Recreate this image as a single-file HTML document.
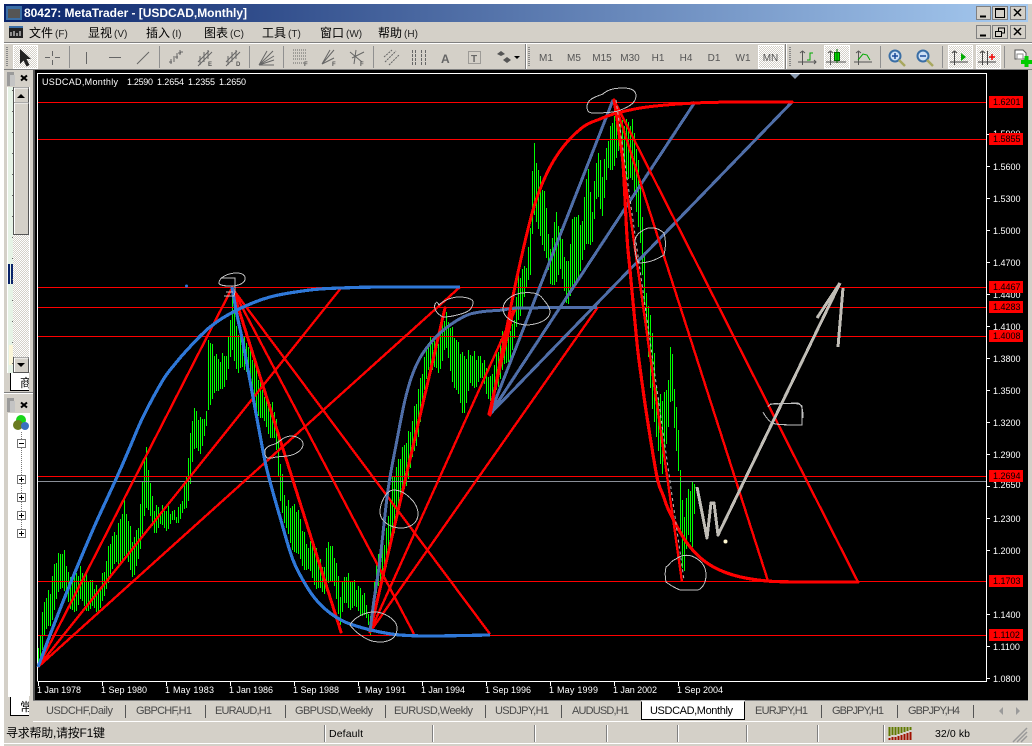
<!DOCTYPE html>
<html><head><meta charset="utf-8"><title>MetaTrader</title>
<style>
html,body{margin:0;padding:0;background:#fff;width:1032px;height:746px;overflow:hidden}
svg{display:block}
text{font-family:"Liberation Sans","WenQuanYi Zen Hei","Noto Sans CJK SC",sans-serif}
.ax{font-size:9px;fill:#fff}
.pl{font-size:9px;fill:#000}
.tb{font-size:11px;fill:#4a4a4a}
.m{font-size:12px;fill:#000}
.ms{font-size:10px;fill:#222}
.tf{font-size:10px;fill:#555}
.sm{font-size:6px;fill:#555;font-weight:bold}
.ic{fill:none;stroke:#666;stroke-width:1}
.r2{fill:none;stroke:#f00;stroke-width:2.4;shape-rendering:crispEdges}
.r3{fill:none;stroke:#f00;stroke-width:3;stroke-linejoin:round;stroke-linecap:round;shape-rendering:crispEdges}
.b1{fill:none;stroke:#2f78d8;stroke-width:3.2;stroke-linejoin:round;shape-rendering:crispEdges}
.b2{fill:none;stroke:#4f6ea8;stroke-width:3;stroke-linejoin:round;shape-rendering:crispEdges}
.w{fill:none;stroke:#c0c0c0;stroke-width:1;shape-rendering:crispEdges}
.g{fill:none;stroke:#c0bdb6;stroke-width:3;stroke-linejoin:round;shape-rendering:crispEdges}
</style></head><body>
<svg width="1032" height="746" viewBox="0 0 1032 746" xmlns="http://www.w3.org/2000/svg">
<defs>
<linearGradient id="tg" x1="0" x2="1" y1="0" y2="0"><stop offset="0" stop-color="#0a246a"/><stop offset="1" stop-color="#a6caf0"/></linearGradient>
<pattern id="dz" width="2" height="2" patternUnits="userSpaceOnUse"><rect width="2" height="2" fill="#d4d0c8"/><rect width="1" height="1" fill="#fff"/><rect x="1" y="1" width="1" height="1" fill="#fff"/></pattern>
</defs>
<rect width="1032" height="746" fill="#d4d0c8"/>
<rect width="1032" height="4" fill="#fff"/><rect width="4" height="746" fill="#fff"/>
<rect x="4" y="4" width="1024" height="18" fill="url(#tg)"/>
<rect x="6" y="6" width="16" height="14" fill="#3a6ea5"/><rect x="8" y="9" width="12" height="9" fill="#555"/>
<text x="24" y="17" font-size="12" font-weight="bold" fill="#fff" textLength="223">80427: MetaTrader - [USDCAD,Monthly]</text>

<!-- window buttons -->
<g fill="#d4d0c8" stroke="#808080">
<rect x="976.500" y="6.500" width="14" height="13"/><rect x="992.500" y="6.500" width="15" height="13"/><rect x="1010.500" y="6.500" width="15" height="13"/>
<rect x="976.500" y="25.500" width="14" height="13"/><rect x="992.500" y="25.500" width="15" height="13"/><rect x="1010.500" y="25.500" width="15" height="13"/>
</g>
<g fill="none" stroke="#000">
<path d="M980 16.500h6M980 35.500h6" stroke-width="2"/>
<rect x="995.500" y="8.500" width="9" height="9"/><path d="M995 9.500h10"/>
<path d="M1014 9l7 7M1021 9l-7 7M1014 28l7 7M1021 28l-7 7" stroke-width="1.500"/>
<rect x="995.500" y="31.500" width="6" height="5"/><path d="M998.500 31v-3h6v5h-3"/>
</g>

<!-- menu -->
<rect x="9" y="26" width="14" height="12" fill="#222"/><rect x="9" y="26" width="14" height="2" fill="#3a6ea5"/><path d="M11 36v-4M14 36v-5M17 36v-3M20 36v-5" stroke="#fff"/>
<text class="m" x="29" y="37">文件<tspan class="ms" dx="2">(F)</tspan></text>
<text class="m" x="88" y="37">显视<tspan class="ms" dx="2">(V)</tspan></text>
<text class="m" x="146" y="37">插入<tspan class="ms" dx="2">(I)</tspan></text>
<text class="m" x="204" y="37">图表<tspan class="ms" dx="2">(C)</tspan></text>
<text class="m" x="262" y="37">工具<tspan class="ms" dx="2">(T)</tspan></text>
<text class="m" x="320" y="37">窗口<tspan class="ms" dx="2">(W)</tspan></text>
<text class="m" x="378" y="37">帮助<tspan class="ms" dx="2">(H)</tspan></text>

<!-- toolbar -->
<rect x="4" y="42" width="1028" height="1" fill="#808080"/><rect x="4" y="43" width="1028" height="1" fill="#fff"/>
<rect x="4" y="69" width="1028" height="1" fill="#808080"/>
<path d="M525.500 44v25M785.500 44v25" stroke="#808080"/><path d="M526.500 44v25M786.500 44v25" stroke="#fff"/>
<path d="M7 47v20M529 47v20M790 47v20" stroke="#888" stroke-width="2" stroke-dasharray="1 1" fill="none"/>
<g fill="url(#dz)" stroke="#fff">
<rect x="13.500" y="45.500" width="24" height="23"/><rect x="758.500" y="45.500" width="25" height="23"/>
<rect x="824.500" y="45.500" width="25" height="23"/><rect x="948.500" y="45.500" width="24" height="23"/><rect x="976.500" y="45.500" width="24" height="23"/>
</g>
<path d="M69.500 46v22M159.500 46v22M249.500 46v22M283.500 46v22M373.500 46v22M880.500 46v22M942.500 46v22M1004.500 46v22" stroke="#909090"/>
<!-- icons -->
<path d="M20 49l0 15 3.500-3.500 3 6 3-1.500-3-6 4.500 0z" fill="#222"/>
<path class="ic" d="M52.500 51v5M52.500 60v5M45 57.500h5M55 57.500h5M86.500 52v12M109 57.500h12M137 64l12-12"/>
<path class="ic" d="M171 64v-5M169 62h3M174 62v-6M177 59v-6M175 57h3M180 55v-5M178 53h3M183 52h-3"/>
<path class="ic" d="M198 62l11-11M198 66l14-14M200 56v9M204 52v10M208 50v9"/><text class="sm" x="208" y="66">E</text>
<path class="ic" d="M226 62l11-11M226 66l14-14M228 56v9M232 52v10M236 50v9"/><text class="sm" x="236" y="66">D</text>
<path class="ic" d="M259 65l14-14M259 65l15-9M259 65l15-5M259 65l15 0M259 65l8-14"/>
<path class="ic" stroke-dasharray="1 1" d="M293 50h14M293 53h14M293 56h14M293 59h14M293 63h12"/><text class="sm" x="304" y="66">F</text>
<path class="ic" d="M322 64l12-14M322 64l8-14M322 64l12-6"/><text class="sm" x="332" y="66">F</text>
<path class="ic" d="M350 52l12 10M356 50l-2 14M364 52l-12 6"/><text class="sm" x="360" y="66">F</text>
<path class="ic" stroke-dasharray="2 1" d="M385 62l11-11M389 65l10-10M384 57l8-7"/>
<path class="ic" d="M412.500 50v15M415.500 50v15M421.500 50v15M425.500 50v15" stroke-dasharray="3 1"/>
<text x="441" y="63" font-size="12" font-weight="bold" fill="#666">A</text>
<rect class="ic" x="468.500" y="51.500" width="12" height="12" stroke-dasharray="1 1"/><text x="471" y="62" font-size="10" font-weight="bold" fill="#666">T</text>
<path d="M497 54l4-3 4 3-4 2zM503 60l4-3 4 3-4 3z" fill="#555"/><path d="M514 56h6l-3 3z" fill="#000"/>

<g class="tf" text-anchor="middle">
<text x="546" y="61">M1</text><text x="574" y="61">M5</text><text x="602" y="61">M15</text><text x="630" y="61">M30</text><text x="658" y="61">H1</text><text x="686" y="61">H4</text><text x="714" y="61">D1</text><text x="743" y="61">W1</text><text x="770.500" y="61">MN</text>
</g>
<path class="ic" style="stroke:#555" d="M802.500 51v14M798 62h18M800 53l2.500-2 2.500 2M814 60l2 2-2 2"/><path d="M807 60h3v-7h3" fill="none" stroke="#0a0"/>
<path class="ic" style="stroke:#555" d="M830.500 51v14M826 62h20M828 53l2.500-2 2.500 2"/><rect x="834.500" y="52.500" width="5" height="8" fill="#0d0" stroke="#060"/><path d="M837 49v14" stroke="#060"/>
<path class="ic" style="stroke:#555" d="M858.500 51v14M854 62h18M856 53l2.500-2 2.500 2"/><path d="M858 60l5-6 4 1 3 5" fill="none" stroke="#0a0"/>
<circle cx="895" cy="56" r="5.500" fill="#cfe0f5" stroke="#3a6ea5" stroke-width="2"/><path d="M892 56h6M895 53v6" stroke="#1a4a9a" stroke-width="1.500"/><path d="M899 60l6 6" stroke="#a8a860" stroke-width="2.500"/>
<circle cx="923" cy="56" r="5.500" fill="#cfe0f5" stroke="#3a6ea5" stroke-width="2"/><path d="M920 56h6" stroke="#1a4a9a" stroke-width="1.500"/><path d="M927 60l6 6" stroke="#a8a860" stroke-width="2.500"/>
<path class="ic" style="stroke:#444" d="M954.500 51v14M950 62h18M952 53l2.500-2 2.500 2"/><path d="M961 53l5 4-5 4z" fill="#0a0"/>
<path class="ic" style="stroke:#444" d="M982.500 51v14M978 62h18M980 53l2.500-2 2.500 2M987.500 51v14"/><path d="M989 57h6M992 54v6" stroke="#e00" stroke-width="1.500"/>
<path d="M1015 50h8l3 3v6h-11z" fill="#fff" stroke="#555"/><path d="M1017 54h6v5h-6z" fill="#fff" stroke="#888"/>
<path d="M1021 62h11M1026.500 56v11" stroke="#0c0" stroke-width="4"/>

<!-- left panels -->
<rect x="4" y="70" width="31" height="652" fill="#d4d0c8"/>
<rect x="33" y="70" width="2" height="652" fill="#555"/>
<rect x="7" y="72" width="7" height="14" fill="#9a9a9a"/><rect x="10" y="75" width="5" height="11" fill="#c4c4c4"/>
<path d="M21 75.500l6 5M27 75.500l-6 5" stroke="#000" stroke-width="2"/>
<!-- market watch -->
<rect x="7" y="87" width="23" height="286" fill="#fff"/>
<rect x="8" y="87" width="5" height="286" fill="#e6f3e6"/>
<rect x="8" y="264" width="2" height="20" fill="#0a246a"/><rect x="11" y="264" width="2" height="20" fill="#0a246a"/>
<rect x="9" y="345" width="4" height="20" fill="#fbf6d8"/>
<path d="M12.500 90v280" stroke="#666" stroke-dasharray="1 20"/>
<rect x="13" y="102" width="16" height="256" fill="url(#dz)"/>
<g fill="#d4d0c8" stroke="#555">
<rect x="13.500" y="87.500" width="15" height="15"/><rect x="13.500" y="102.500" width="15" height="132"/><rect x="13.500" y="357.500" width="15" height="15"/>
</g>
<path d="M14.500 102v-14h14M14.500 234v-131h14M14.500 372v-14h14" stroke="#fff" fill="none"/>
<path d="M17 98h8l-4-4zM17 363h8l-4 4z" fill="#000"/>
<path d="M10.500 373v17.500h18.500" fill="#fff" stroke="#000"/>
<rect x="11" y="373" width="18" height="17" fill="#fff"/>
<text x="20" y="387" font-size="12" fill="#000">商</text>
<rect x="29" y="372" width="4" height="20" fill="#d4d0c8"/>
<rect x="4" y="392" width="29" height="1" fill="#808080"/><rect x="4" y="393" width="29" height="1" fill="#fff"/>
<!-- navigator -->
<rect x="7" y="398" width="7" height="14" fill="#9a9a9a"/><rect x="10" y="401" width="5" height="11" fill="#c4c4c4"/>
<path d="M21 402.500l6 5M27 402.500l-6 5" stroke="#000" stroke-width="2"/>
<rect x="8" y="413" width="22" height="284" fill="#fff"/>
<circle cx="21" cy="420" r="5" fill="#19d619"/><circle cx="18" cy="425" r="5" fill="#6a7a20"/><circle cx="25" cy="426" r="4" fill="#3a70c0"/>
<path d="M21.500 432v105" stroke="#777" stroke-dasharray="1 1"/>
<g fill="#fff" stroke="#777"><rect x="17.500" y="439.500" width="8" height="8"/><rect x="17.500" y="475.500" width="8" height="8"/><rect x="17.500" y="493.500" width="8" height="8"/><rect x="17.500" y="511.500" width="8" height="8"/><rect x="17.500" y="529.500" width="8" height="8"/></g>
<path d="M19 443.500h5M19 479.500h5M21.500 477v5M19 497.500h5M21.500 495v5M19 515.500h5M21.500 513v5M19 533.500h5M21.500 531v5" stroke="#000"/>
<path d="M10.500 697v18.500h18.500" stroke="#000" fill="#fff"/>
<rect x="11" y="697" width="18" height="18" fill="#fff"/>
<text x="20" y="711" font-size="12" fill="#000">常</text>
<rect x="29" y="696" width="4" height="22" fill="#d4d0c8"/>

<!-- chart -->
<rect x="35" y="70" width="993" height="630" fill="#000"/>
<path d="M37.500 681V73.500H986.500V681.500H37.500" fill="none" stroke="#fff"/>
<path d="M790 74h10l-5 5z" fill="#8a9ab0"/>
<g class="ax"><text x="42" y="85" textLength="76">USDCAD,Monthly</text><text x="127" y="85" textLength="26">1.2590</text><text x="157" y="85" textLength="27">1.2654</text><text x="188" y="85" textLength="27">1.2355</text><text x="219" y="85" textLength="27">1.2650</text></g>

<path id="bars" d="" fill="none" stroke="#0f0" stroke-width="1" shape-rendering="crispEdges"/>
<g fill="none" stroke-width="1" shape-rendering="crispEdges">
<path d="M38 102.500H986M38 139.500H986M38 287.500H986M38 307.500H986M38 336.500H986M38 476.500H986M38 581.500H986M38 635.500H986" stroke="#f00"/>
<path d="M38 481.500H986" stroke="#8a8f98"/>
</g>

<!-- ticks -->
<path d="M38.500 681v5M102.500 681v5M166.500 681v5M230.500 681v5M294.500 681v5M358.500 681v5M422.500 681v5M486.500 681v5M550.500 681v5M614.500 681v5M678.500 681v5" stroke="#fff"/>
<path d="M987 134.500h3M987 166.500h3M987 198.500h3M987 230.500h3M987 262.500h3M987 294.500h3M987 326.500h3M987 358.500h3M987 390.500h3M987 422.500h3M987 454.500h3M987 486.500h3M987 518.500h3M987 550.500h3M987 614.500h3M987 646.500h3M987 678.500h3" stroke="#fff"/>
<g class="ax">
<text x="37" y="693" textLength="44">1 Jan 1978</text><text x="101" y="693" textLength="46">1 Sep 1980</text><text x="165" y="693" textLength="49">1 May 1983</text><text x="229" y="693" textLength="44">1 Jan 1986</text><text x="293" y="693" textLength="46">1 Sep 1988</text><text x="357" y="693" textLength="49">1 May 1991</text><text x="421" y="693" textLength="44">1 Jan 1994</text><text x="485" y="693" textLength="46">1 Sep 1996</text><text x="549" y="693" textLength="49">1 May 1999</text><text x="613" y="693" textLength="44">1 Jan 2002</text><text x="677" y="693" textLength="46">1 Sep 2004</text>
<text x="993" y="137">1.5900</text><text x="993" y="170">1.5600</text><text x="993" y="202">1.5300</text><text x="993" y="234">1.5000</text><text x="993" y="266">1.4700</text><text x="993" y="298">1.4400</text><text x="993" y="330">1.4100</text><text x="993" y="362">1.3800</text><text x="993" y="394">1.3500</text><text x="993" y="426">1.3200</text><text x="993" y="458">1.2900</text><text x="993" y="488">1.2650</text><text x="993" y="522">1.2300</text><text x="993" y="554">1.2000</text><text x="993" y="618">1.1400</text><text x="993" y="650">1.1100</text><text x="993" y="682">1.0800</text>
</g>
<g fill="#f00">
<rect x="989" y="96" width="34" height="12"/><rect x="989" y="133" width="34" height="12"/><rect x="989" y="281" width="34" height="12"/><rect x="989" y="301" width="34" height="12"/><rect x="989" y="330" width="34" height="12"/><rect x="989" y="470" width="34" height="12"/><rect x="989" y="575" width="34" height="12"/><rect x="989" y="629" width="34" height="12"/>
</g>
<g class="pl">
<text x="993" y="105">1.6201</text><text x="993" y="142">1.5855</text><text x="993" y="290">1.4467</text><text x="993" y="310">1.4283</text><text x="993" y="339">1.4008</text><text x="993" y="479">1.2694</text><text x="993" y="584">1.1703</text><text x="993" y="638">1.1102</text>
</g>

<!-- red lines group 1 -->
<path class="r2" d="M38 667L232 288M38 667L341 288M38 667L460 287"/>
<path class="r3" d="M232 288L341 632"/>
<path class="r2" d="M232 288L414 634M232 288L490 634"/>
<path class="r3" d="M370 632L445 308"/>
<path class="r2" d="M370 632L516 308M370 632L598 307"/>
<path class="r3" d="M489 414L514 308"/>
<!-- blue curves -->
<polyline class="b1" points="38,667 55,622 73,577 95,525 117,477 130,447 143,417 163,380 175,364 187,350 210,327 237,310 270,297 310,290 340,288 380,287 460,287"/>
<polyline class="b1" points="232,287 237,315 243,343 253,397 260,435 267,470 280,517 293,560 307,587 318,602 330,613 345,622 363,628 380,632 400,635 430,636 490,635"/>
<polyline class="b2" points="370,632 374,600 380,560 388,490 397,440 405,400 413,373 423,353 440,333 463,317 480,312 503,310 520,308 597,307.500"/>
<path class="b2" d="M490 414L613 100M490 414L695 102M490 414L792 102"/>
<!-- red group 2 -->
<polyline class="r3" points="490,415 503,347 517,277 533,210 547,173 563,147 583,127 600,119 617,113 647,107 695,103 740,102 792,102"/>
<polyline class="r3" style="stroke-width:3.2" points="614,100 619,130 623,163 627,237 630,270 637,343 641,375 647,417 657,477 663,495 670,513 687,543 707,563 733,575 767,581 810,582 858,582"/>
<path class="r2" d="M614 100L682 582M614 100L768 581M614 100L858 582"/>
<path d="M616 100L640 270 684 580" fill="none" stroke="#bbb" stroke-width="1" stroke-dasharray="3 3"/>

<!-- gray hand drawn -->
<path class="g" d="M697 487L707 538 711 503 714 503 718 535 840 283"/>
<path class="g" d="M817 318L840 283M843 288L838 347"/>
<circle cx="725.500" cy="541.500" r="2" fill="#fff8d0"/>
<circle cx="186.500" cy="286" r="1.500" fill="#2f78d8"/>
<g class="w">
<path d="M219 283c0-5 8-10 18-10 7 0 9 4 8 7-2 4-7 6-15 6-6 0-11-1-11-3zM221 278h14v14l-1 4h-10M226 292h7"/>
<path d="M265 451c0-4 6-6 10-7 6-3 9-8 16-8 5 0 12 3 12 8 0 5-5 9-11 11-7 2-14 1-20 3h-5c-2-2-2-4-2-7z"/>
<path d="M350 625c3-6 12-12 22-13 12-1 25 8 25 16 0 8-5 13-15 14-8 0-12-1-17-4-5-3-11-7-15-13z"/>
<path d="M380 512c0-9 6-22 14-22 10 0 24 12 24 24 0 9-8 14-17 14-11 0-21-7-21-16z"/>
<path d="M435 304c2-3 2-2 4 1 4-4 12-8 20-8 7 0 14 2 14 5 0 7-5 10-12 12-7 2-12 3-18 3-4-2-10-7-8-13z"/>
<path d="M503 309c0-8 8-14 18-16 12-1 18 0 22 6 4 5 7 8 7 13 0 7-10 12-22 13-10 0-25-6-25-16z"/>
<path d="M587 107c0-8 8-10 16-13 4-4 11-6 20-6 8 0 13 2 13 8 0 8-10 12-18 15-8 2-18 2-25 2-4 0-6-2-6-6z"/>
<path d="M635 240c1-5 5-9 13-12 7-1 11 1 16 5 2 7 2 14 0 22-7 4-14 8-26 8-2-6-4-14-3-23z"/>
<path d="M763 412c2 4 5 8 9 11 4 2 18 2 30 2v-4-15c-3-3-10-3-22-2-6-1-11 0-12 3M770 404c5 0 26-1 28-1 5 2 5 10 5 15"/>
<path d="M666 567c4-2 4-6 10-8 5-4 12-5 18-2 8 4 12 10 12 18 0 7-3 13-8 15h-18c-5-2-10-5-14-8-1-5-1-11 0-15z"/>
</g>

<!-- tab bar -->
<rect x="33" y="700" width="999" height="22" fill="#d4d0c8"/>
<rect x="33" y="700" width="995" height="1" fill="#808080"/><rect x="33" y="721" width="999" height="1" fill="#fff"/>
<path d="M125.500 705v13M205.500 705v13M285.500 705v13M385.500 705v13M485.500 705v13M561.500 705v13M821.500 705v13M897.500 705v13M973.500 705v13" stroke="#555"/>
<path d="M641.500 701v18.500h103V701" fill="#fff" stroke="#000"/>
<path d="M641 701h104" stroke="#fff"/>
<g class="tb">
<text x="46" y="714" textLength="67">USDCHF,Daily</text>
<text x="136" y="714" textLength="56">GBPCHF,H1</text>
<text x="215" y="714" textLength="57">EURAUD,H1</text>
<text x="295" y="714" textLength="78">GBPUSD,Weekly</text>
<text x="394" y="714" textLength="79">EURUSD,Weekly</text>
<text x="495" y="714" textLength="54">USDJPY,H1</text>
<text x="572" y="714" textLength="57">AUDUSD,H1</text>
<text x="650" y="714" textLength="83" style="fill:#000">USDCAD,Monthly</text>
<text x="755" y="714" textLength="53">EURJPY,H1</text>
<text x="832" y="714" textLength="52">GBPJPY,H1</text>
<text x="908" y="714" textLength="52">GBPJPY,H4</text>
</g>
<path d="M1003 707l-4 4 4 4zM1016 707l4 4-4 4z" fill="#9a9a9a"/>

<!-- status bar -->
<text x="6" y="737" font-size="12" fill="#000" textLength="99">寻求帮助,请按F1键</text>
<text x="329" y="737" font-size="10.500" fill="#000" textLength="34">Default</text>
<path d="M324.500 725v17M432.500 725v17M534.500 725v17M606.500 725v17M677.500 725v17M746.500 725v17M817.500 725v17M883.500 725v17" stroke="#808080"/>
<path d="M325.500 725v17M433.500 725v17M535.500 725v17M607.500 725v17M678.500 725v17M747.500 725v17M818.500 725v17M884.500 725v17" stroke="#fff"/>
<path d="M889.500 727v9M892.500 727v8M895.500 727v8M898.500 727v7M901.500 727v6M904.500 727v5M907.500 727v4M910.500 727v3" stroke="#5f7a00" stroke-width="2"/>
<path d="M889.500 738v2M892.500 737v3M895.500 737v3M898.500 736v4M901.500 735v5M904.500 734v6M907.500 733v7M910.500 732v8" stroke="#a01000" stroke-width="2"/>
<text x="935" y="737" font-size="10.500" fill="#000" textLength="35">32/0 kb</text>
<path d="M1013 742l14-14M1017 742l10-10M1021 742l6-6" stroke="#999" stroke-width="1.500"/>
<rect x="4" y="743" width="1028" height="1" fill="#fff"/>
</svg>
<script>
var k=[[38,648,667],[44,600,637],[50,590,625],[55,560,603],[63,550,583],[70,580,613],[80,570,603],[90,580,610],[98,590,610],[104,570,600],[110,540,570],[117,530,565],[124,503,557],[133,543,575],[139,520,560],[145,443,503],[153,507,530],[160,508,528],[167,510,527],[177,513,520],[183,495,515],[187,467,507],[193,407,453],[200,420,450],[206,415,430],[208,337,413],[213,350,390],[218,360,395],[227,353,377],[232,293,350],[238,337,373],[247,342,367],[254,363,403],[263,393,423],[275,410,443],[280,460,497],[285,503,530],[297,508,557],[307,547,570],[313,542,580],[323,570,597],[328,540,580],[335,557,590],[340,593,623],[345,573,603],[355,585,610],[363,592,613],[370,620,633],[373,590,603],[378,550,590],[385,540,570],[392,480,540],[400,455,500],[410,430,470],[417,395,440],[428,340,367],[438,340,373],[445,313,347],[453,333,383],[463,357,413],[470,353,387],[483,360,380],[490,380,403],[502,333,373],[513,327,347],[518,277,320],[527,263,287],[530,227,273],[533,140,208],[537,167,230],[545,197,250],[550,253,288],[555,212,280],[560,230,273],[567,270,303],[573,213,293],[582,223,263],[587,163,240],[592,210,242],[597,148,193],[602,173,213],[608,137,170],[615,110,163],[620,123,150],[627,122,183],[633,123,180],[640,180,247],[643,237,293],[647,307,337],[651,317,407],[657,397,440],[662,397,477],[667,390,437],[671,337,385],[675,403,447],[678,427,470],[680,470,530],[683,520,582],[686,500,553],[688,490,537],[692,485,543],[694,482,512]];
var d="",j=0;
for(var x=38,i=0;x<=694;x+=2,i++){
 while(j<k.length-2&&k[j+1][0]<x)j++;
 var a=k[j],b=k[j+1],t=Math.min(1,(x-a[0])/(b[0]-a[0]));
 var hi=a[1]+(b[1]-a[1])*t+4*Math.sin(i*2.3),lo=a[2]+(b[2]-a[2])*t+4*Math.sin(i*1.1);
 d+="M"+(x+.5)+" "+Math.round(hi)+"V"+Math.round(Math.max(lo,hi+6));
}
document.getElementById("bars").setAttribute("d",d);
/* smooth the hand-placed curve points (Catmull-Rom to Bezier) */
document.querySelectorAll("polyline").forEach(function(pl){
 var p=pl.getAttribute("points").trim().split(/\s+/).map(function(s){return s.split(",").map(Number)});
 var s="M"+p[0][0]+" "+p[0][1];
 for(var i=0;i<p.length-1;i++){
  var p0=p[i-1]||p[i],p1=p[i],p2=p[i+1],p3=p[i+2]||p2;
  s+="C"+(p1[0]+(p2[0]-p0[0])/6)+" "+(p1[1]+(p2[1]-p0[1])/6)+" "+(p2[0]-(p3[0]-p1[0])/6)+" "+(p2[1]-(p3[1]-p1[1])/6)+" "+p2[0]+" "+p2[1];
 }
 var e=document.createElementNS("http://www.w3.org/2000/svg","path");
 e.setAttribute("d",s);e.setAttribute("class",pl.getAttribute("class"));
 if(pl.getAttribute("style"))e.setAttribute("style",pl.getAttribute("style"));
 pl.parentNode.replaceChild(e,pl);
});
</script>
</body></html>
